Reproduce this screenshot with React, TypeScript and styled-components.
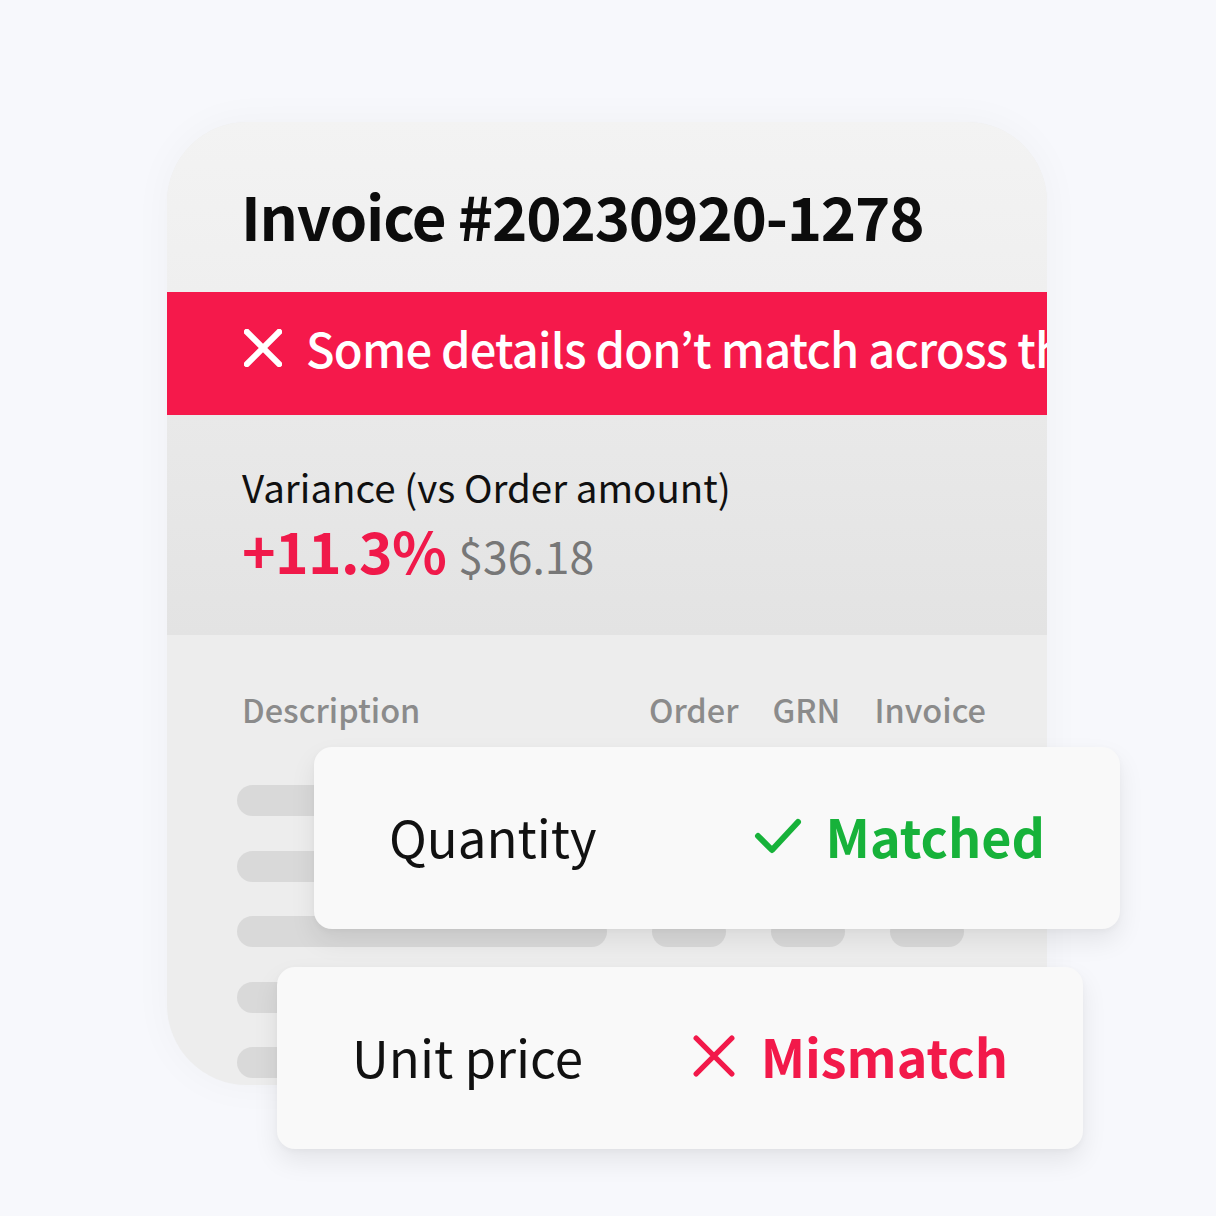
import styled, { createGlobalStyle } from "styled-components";

const GlobalStyle = createGlobalStyle`
  body {
    margin: 0;
    background: #f7f8fc;
    font-family: "Noto Sans CJK JP", "Noto Sans", sans-serif;
  }
`;

const CloseIcon = ({ size, color, stroke }: { size: number; color: string; stroke: number }) => (
  <IconBox>
    <svg width={size} height={size} viewBox="0 0 40 40" fill="none">
      <path d="M3 3L37 37M37 3L3 37" stroke={color} strokeWidth={stroke} strokeLinecap="round" />
    </svg>
  </IconBox>
);

const CheckIcon = () => (
  <IconBox>
    <svg width="48" height="36" viewBox="0 0 48 36" fill="none">
      <path d="M4 18L18 32L44 4" stroke="#17b23a" strokeWidth="6" strokeLinecap="round" strokeLinejoin="round" />
    </svg>
  </IconBox>
);

const rows = [
  { desc: 300, cols: true },
  { desc: 300, cols: true },
  { desc: 370, cols: true },
  { desc: 300, cols: false },
  { desc: 300, cols: false },
];

export default function App() {
  return (
    <>
      <GlobalStyle />
      <Page>
        <Scene>
          <Card>
            <TitleArea>
              <Title>Invoice #20230920-1278</Title>
            </TitleArea>
            <Banner>
              <CloseIcon size={38} color="#ffffff" stroke={6.5} />
              <BannerText>Some details don’t match across the documents</BannerText>
            </Banner>
            <Variance>
              <VarianceLabel>Variance (vs Order amount)</VarianceLabel>
              <VarianceValue>
                <Percent>+11.3%</Percent>
                <Amount>$36.18</Amount>
              </VarianceValue>
            </Variance>
            <Table>
              <HeaderRow>
                <HeaderCell>Description</HeaderCell>
                <HeaderCell>Order</HeaderCell>
                <HeaderCell>GRN</HeaderCell>
                <HeaderCell>Invoice</HeaderCell>
              </HeaderRow>
              <Rows>
                {rows.map((r, i) => (
                  <BarRow key={i}>
                    <Bar style={{ width: r.desc }} />
                    {r.cols && (
                      <>
                        <Bar />
                        <Bar />
                        <Bar />
                      </>
                    )}
                  </BarRow>
                ))}
              </Rows>
            </Table>
          </Card>

          <Popup $left={147} $top={625}>
            <FieldName>Quantity</FieldName>
            <Status $color="#17b23a" $gap={24}>
              <CheckIcon />
              Matched
            </Status>
          </Popup>

          <Popup $left={110} $top={845}>
            <FieldName>Unit price</FieldName>
            <Status $color="#f2194a" $gap={26}>
              <CloseIcon size={42} color="#f2194a" stroke={5} />
              Mismatch
            </Status>
          </Popup>
        </Scene>
      </Page>
    </>
  );
}

const Page = styled.div`
  min-height: 1216px;
  box-sizing: border-box;
  padding: 122px 0 0 167px;
  overflow: hidden;
`;

const Scene = styled.div`
  position: relative;
  width: 880px;
`;

const IconBox = styled.span`
  display: flex;
  flex-shrink: 0;
`;

const Card = styled.div`
  width: 880px;
  height: 963px;
  border-radius: 80px;
  overflow: hidden;
  background: #ededed;
  box-shadow: 0 0 40px rgba(0, 0, 0, 0.035);
`;

const TitleArea = styled.div`
  height: 170px;
  box-sizing: border-box;
  padding: 57px 0 0 74px;
  background: linear-gradient(#f3f3f3, #efefef);
`;

const Title = styled.h1`
  margin: 0;
  font-size: 60px;
  line-height: 72px;
  font-weight: 700;
  color: #0c0c0c;
  letter-spacing: -1.2px;
  white-space: nowrap;
`;

const Banner = styled.div`
  height: 123px;
  box-sizing: border-box;
  padding: 0 0 12px 77px;
  display: flex;
  align-items: center;
  gap: 24px;
  background: #f5194b;
  overflow: hidden;
`;

const BannerText = styled.span`
  font-size: 47px;
  line-height: 60px;
  font-weight: 500;
  color: #ffffff;
  letter-spacing: -0.8px;
  white-space: nowrap;
`;

const Variance = styled.div`
  height: 220px;
  box-sizing: border-box;
  padding: 48px 0 0 75px;
  background: linear-gradient(#e9e9e9, #e3e3e3);
`;

const VarianceLabel = styled.div`
  font-size: 38.5px;
  line-height: 46px;
  color: #101010;
`;

const VarianceValue = styled.div`
  margin-top: 8px;
  line-height: 64px;
  display: flex;
  align-items: baseline;
  gap: 12px;
`;

const Percent = styled.span`
  font-size: 57px;
  font-weight: 700;
  color: #f0194a;
  letter-spacing: -0.6px;
`;

const Amount = styled.span`
  font-size: 44.5px;
  color: #777777;
`;

const Table = styled.div`
  padding: 54px 0 0 70px;
`;

const HeaderRow = styled.div`
  display: grid;
  grid-template-columns: 1fr auto auto auto;
  column-gap: 34px;
  padding: 0 61px 0 5px;
`;

const HeaderCell = styled.div`
  font-size: 32.5px;
  line-height: 40px;
  font-weight: 500;
  color: #8b8b8b;
`;

const Rows = styled.div`
  margin-top: 56px;
  display: flex;
  flex-direction: column;
  gap: 34.5px;
`;

const BarRow = styled.div`
  display: grid;
  grid-template-columns: 370px 74px 74px 74px;
  column-gap: 45px;
  height: 31px;
`;

const Bar = styled.div`
  height: 31px;
  border-radius: 16px;
  background: #d9d9d9;
`;

const Popup = styled.div<{ $left: number; $top: number }>`
  position: absolute;
  left: ${(p) => p.$left}px;
  top: ${(p) => p.$top}px;
  width: 806px;
  height: 182px;
  box-sizing: border-box;
  padding: 0 75px 4px 75px;
  display: flex;
  align-items: center;
  justify-content: space-between;
  border-radius: 18px;
  background: #f9f9f9;
  box-shadow: 0 12px 26px rgba(0, 0, 0, 0.08), 0 2px 6px rgba(0, 0, 0, 0.03);
`;

const FieldName = styled.div`
  font-size: 51px;
  line-height: 60px;
  color: #111111;
`;

const Status = styled.div<{ $color: string; $gap: number }>`
  display: flex;
  align-items: center;
  gap: ${(p) => p.$gap}px;
  font-size: 52px;
  line-height: 60px;
  font-weight: 700;
  color: ${(p) => p.$color};
`;
